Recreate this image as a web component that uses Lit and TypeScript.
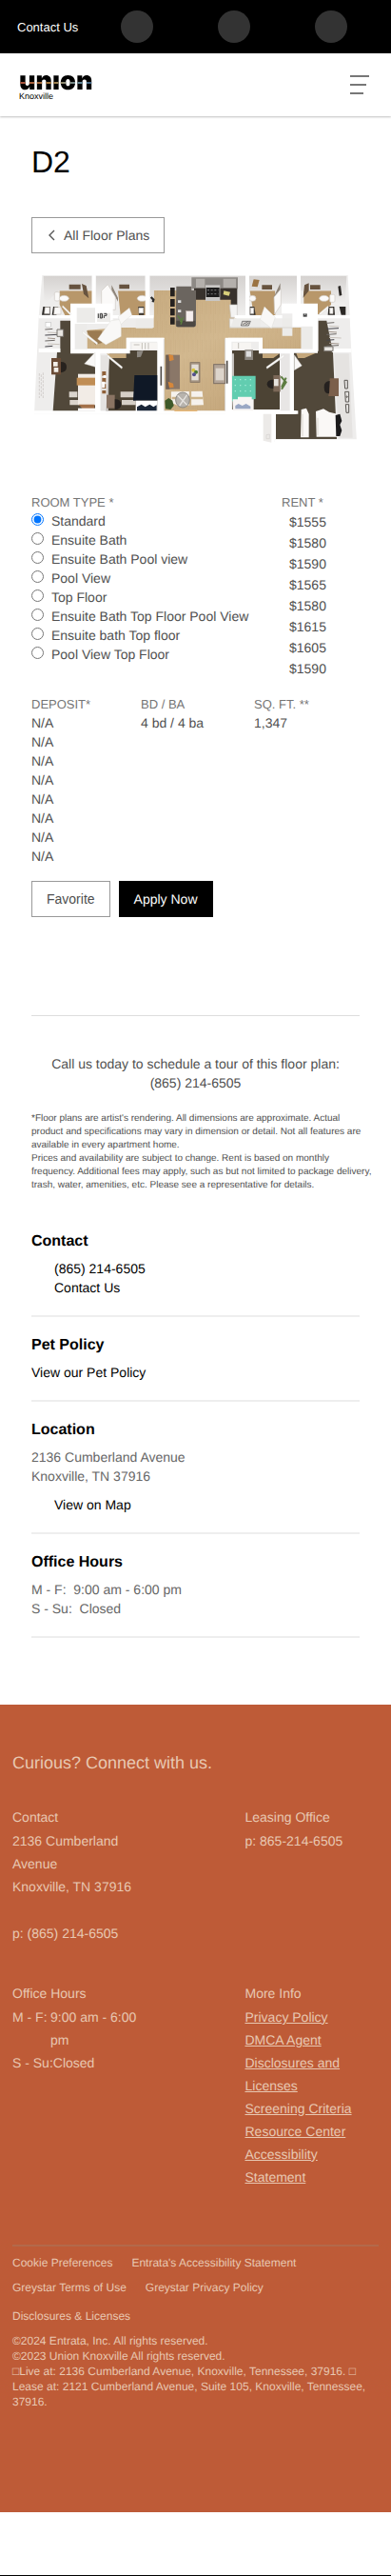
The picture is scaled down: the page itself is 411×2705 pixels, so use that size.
import { LitElement, html, css, svg } from "lit";
import { customElement, state } from "lit/decorators.js";

const SANS = css`"Liberation Sans", Arial, Helvetica, sans-serif`;

interface Room {
  name: string;
  rent: string;
}

const ROOMS: Room[] = [
  { name: "Standard", rent: "$1555" },
  { name: "Ensuite Bath", rent: "$1580" },
  { name: "Ensuite Bath Pool view", rent: "$1590" },
  { name: "Pool View", rent: "$1565" },
  { name: "Top Floor", rent: "$1580" },
  { name: "Ensuite Bath Top Floor Pool View", rent: "$1615" },
  { name: "Ensuite bath Top floor", rent: "$1605" },
  { name: "Pool View Top Floor", rent: "$1590" },
];

@customElement("site-header")
export class SiteHeader extends LitElement {
  static styles = css`
    :host {
      display: block;
    }
    .quick {
      display: grid;
      grid-template-columns: 75px repeat(3, 1fr);
      align-items: center;
      height: 56px;
      padding: 0 12px 0 18px;
      background: #000;
      font-size: 13px;
    }
    .quick a {
      color: #fff;
      text-decoration: none;
      white-space: nowrap;
    }
    .quick .dot {
      width: 34px;
      height: 34px;
      border-radius: 50%;
      background: #333;
      justify-self: center;
    }
    .brand {
      display: flex;
      justify-content: space-between;
      align-items: center;
      height: 66px;
      padding: 0 23px 0 20px;
      background: #fff;
      box-shadow: 0 1px 2px rgba(0, 0, 0, 0.25);
    }
    .logo {
      display: flex;
      flex-direction: column;
      color: #000;
      text-decoration: none;
    }
    .word {
      font: 900 27px/23px Inter, "Liberation Sans", sans-serif;
      color: transparent;
      background:
        linear-gradient(90deg, #a8503c, #a37a3e 45%, #8d8970 60%, #5f8496 85%, #3f6080)
          0 13px / 100% 2px no-repeat,
        #000;
      -webkit-background-clip: text;
      background-clip: text;
    }
    .city {
      font-size: 9px;
      line-height: 10px;
    }
    .menu {
      display: flex;
      padding: 0;
      border: 0;
      background: none;
    }
  `;

  render() {
    return html`
      <nav class="quick" aria-label="Quick links">
        <a href="#contact">Contact Us</a>
        <a class="dot" href="#call" aria-label="Call"></a>
        <a class="dot" href="#map" aria-label="Map"></a>
        <a class="dot" href="#share" aria-label="Share"></a>
      </nav>
      <header class="brand">
        <a class="logo" href="#home">
          <span class="word">unıon</span>
          <span class="city">Knoxville</span>
        </a>
        <button class="menu" aria-label="Menu">
          <svg width="20" height="20" viewBox="0 0 20 20" stroke="#777" stroke-width="2">
            <path d="M0 1h20M0 10h17M0 19h14" />
          </svg>
        </button>
      </header>
    `;
  }
}

@customElement("plan-picture")
export class PlanPicture extends LitElement {
  static styles = css`
    :host,
    svg {
      display: block;
      width: 100%;
    }
  `;

  private clothes(x: number, y: number, n: number) {
    return Array.from(
      { length: n },
      (_, i) => svg`<path d="M${x + (i % 2) * 8} ${y + i * 9}l${24 + (i % 3) * 7} ${(i % 2) * 4 - 2}"
        stroke=${["#6d6865", "#c9c3bc", "#45444a", "#a3978d"][i % 4]} stroke-width="3" />`
    );
  }

  render() {
    return html`
      <svg viewBox="99 30 1035 570" role="img" aria-label="Four bedroom, four bathroom floor plan">
        <defs>
          <linearGradient id="wood" x1="0" y1="0" x2="1" y2="1">
            <stop offset="0" stop-color="#c3a67a" />
            <stop offset="0.5" stop-color="#d2b88f" />
            <stop offset="1" stop-color="#bfa074" />
          </linearGradient>
          <pattern id="planks" width="14" height="60" patternUnits="userSpaceOnUse">
            <path d="M0 0v60M7 20v40" stroke="#a98c60" stroke-width="1" opacity="0.35" />
          </pattern>
          <linearGradient id="wall" x1="0" y1="0" x2="0" y2="1">
            <stop offset="0" stop-color="#d5d2d0" />
            <stop offset="1" stop-color="#f1f0ef" />
          </linearGradient>
        </defs>

        <path fill="#eeedec" d="M133 57H1097L1103 190L1108 300L1125 582H866V494H108L122 190Z" />

        <!-- timber floors -->
        <path fill="url(#wood)"
          d="M485 104H745V222H950V288H828V254H720V486H517V254H400V288H275V230L380 222H485Z" />
        <path fill="url(#planks)"
          d="M485 104H745V222H950V288H828V254H720V486H517V254H400V288H275V230L380 222H485Z" />
        <path fill="#b8976a" d="M188 106H290V148H228V183H205L188 150Z" />
        <path fill="#b8976a" d="M372 106H462V183H380Z" />
        <path fill="#b8976a" d="M788 106H868V183H800Z" />
        <path fill="#b8976a" d="M958 106H1044V150L1010 180H1000V148H958Z" />
        <path fill="#9b7b52" d="M272 232H322V270L300 275Z" />

        <!-- carpets -->
        <path fill="#51483a" d="M190 200H222V300H302V486H167L180 300H190Z" />
        <path fill="#4c4334" d="M346 294H497V486H334Z" />
        <path fill="#4c4334" d="M732 294H882V486H732Z" />
        <path fill="#51483a" d="M1004 200H1030L1050 300L1062 574H868V494H927V296H1004Z" />
        <path fill="#c4a77b" d="M336 304H398V318H350ZM828 304H882L862 318H828ZM934 302H996L960 318H940Z" />

        <!-- bathroom walls and fixtures -->
        <path fill="url(#wall)"
          d="M137 60H290V106H185L140 150ZM302 60H458V106H372V150H302ZM786 60H938V148H868V106H786ZM948 60H1093L1088 150H1044V106H948Z" />
        <path fill="url(#wall)" d="M472 60H775V188H745V104H485V188H472Z" />
        <path fill="#67533f" d="M218 86h36v15h-36zM258 84l14 6 8 40-16-14zM376 86h32v14h-32zM826 88h32v14h-32zM978 88h32v14h-32zM956 128l4-40 14-6v24z" />
        <path fill="#8e8479" d="M862 128l22-46v26l-14 22zM352 88l20 40v12l-20-36z" />
        <path fill="#9b7342" d="M800 70l18 2-6 22-18-2z" />
        <path fill="#2c2926" d="M1066 92l8-2 4 30-8 2zM136 156h22v26h-26zM168 156h16l-6 26h-14zM436 156h18v26h-16zM788 156h14l4 26h-18zM1036 156h18l2 26h-22zM1070 156h20v26h-14z" />
        <g fill="#fbfaf9" stroke="#cfc9c2" stroke-width="2">
          <rect x="172" y="110" width="16" height="28" rx="5" />
          <ellipse cx="202" cy="130" rx="15" ry="9" />
          <ellipse cx="448" cy="130" rx="15" ry="9" />
          <ellipse cx="796" cy="130" rx="11" ry="9" />
          <ellipse cx="1022" cy="130" rx="15" ry="9" />
          <rect x="1040" y="118" width="16" height="24" rx="4" />
          <path d="M142 158h14v20h-16zM172 158h20v22h-22zM438 160h14v16h-14zM790 160h10v18h-10zM1040 160h10v18h-10z" />
          <path d="M320 106l20-20 24 40v40h-44z" />
          <path d="M864 126l22-26v50l-20 30z" />
        </g>

        <!-- kitchen -->
        <path fill="#8d8985" d="M604 64h146v36H604z" />
        <path fill="#b4b0ac" d="M618 68h28v28h-28zM704 68h40v28h-40z" />
        <path fill="#38322d" d="M612 98h136v52H728v-16H612z" />
        <rect x="648" y="88" width="46" height="50" fill="#c9c7c5" />
        <rect x="650" y="96" width="42" height="30" fill="#1d1c1c" />
        <path d="M654 104h34M654 116h34" stroke="#777" stroke-width="3" stroke-dasharray="6 5" />
        <path fill="#d8cf7a" d="M706 106l20 4-4 12-18-4z" />
        <path fill="#6b655f" d="M556 92h48v12h14v108q0 8-8 8h-50q-6 0-6-8z" />
        <path fill="#4d4843" d="M556 200h60v12q0 8-8 8h-46q-6 0-6-8z" />
        <rect x="587" y="170" width="22" height="32" fill="#f5eeee" stroke="#d4c6c0" />
        <path d="M544 96v28M544 132v24M544 162v22M544 190v22" stroke="#25211f" stroke-width="14" />
        <path d="M566 136v8M566 166v8" stroke="#ddd" stroke-width="10" />
        <path d="M560 184l14 18-4 10M578 190l-10 14" stroke="#5b7f3d" stroke-width="4" fill="none" />
        <path d="M476 126l8 8-2 8" stroke="#2b2b2b" stroke-width="7" fill="none" />
        <path fill="#f4f3f2" stroke="#c9c5c1" stroke-width="2" d="M724 150h24v40h-20zM724 194h14v26h-14z" />

        <!-- interior wall tops -->
        <path fill="#ecebe9" d="M234 210h40v80h-40zM428 190h54v34h-54zM738 193h84v29h-96zM890 193h32v55h-32zM950 216h46v72h-46z" />
        <g fill="#fff">
          <path d="M290 57h12v100h-12zM458 57h14v132h-14zM774 57h12v132h-12zM936 57h12v100h-12zM122 183h108v10H122zM354 183h130v10H354zM740 183h150v10H740zM1000 183h104v10h-104z" />
          <path d="M228 146h128v64H236v80h-14V146z" />
          <path d="M888 146h114v152h-16v-80h-64v-40h-34z" />
          <path d="M222 290h176v-36h120v234h-22V266H410v38H316v184h-16V304h-78zM122 288h68v12h-68z" />
          <path d="M710 254h118v36h174v12h-76v182h14v10H710v-14h172V304h-66v-38h-86v218h-20z" />
          <path d="M1050 288h58v12h-62z" />
          <path d="M108 484h826v10H108zM862 494h8v80h-8z" />
          <path d="M866 574h260v9H866z" />
        </g>
        <path d="M724 222h196v4M517 258v226M710 258v226" stroke="#d9d6d2" stroke-width="3" fill="none" />
        <path fill="#ecebe9" d="M242 160h58v46h-58zM306 176h42v28h-42z" />
        <path fill="#e2e0de" d="M732 304h6v110l-6 60zM318 310h26l-2 174h-24zM884 304h30v180h-30zM1054 304h46l12 265h-44z" opacity="0.8" />
        <path d="M310 178v14M316 178v14h6v-14h-6M328 178h8v6h-8v8M322 192v-12" stroke="#3a3a3a" stroke-width="3" fill="none" />
        <path d="M956 178h12v10h-12z" fill="#444" />
        <path d="M962 178v5" stroke="#fff" stroke-width="2" />
        <path d="M764 202h26l-6 14h-24z" fill="#d6d2ce" stroke="#4b4b4b" stroke-width="2" />
        <path d="M766 212l16-9M774 214l12-8" stroke="#4b4b4b" stroke-width="2" />

        <!-- doors -->
        <g fill="#f9f8f7" stroke="#d6d3cf" stroke-width="1">
          <path d="M308 258l42-58 32-4v54l-48 26z" />
          <path d="M372 188l36-28 8 22-24 20-10 10z" />
          <path d="M820 196l14-40 34 34-12 34z" />
          <path d="M266 336l34-36v46zM928 308l24 34-24 14z" />
          <path d="M260 232l48 38-2 6-46-36zM340 308l46 38-2 6-46-38zM896 306l-56 40 2 6 54-38z" />
          <path d="M198 152l26 26-2 5-26-26zM1006 178l28-24 2 6-26 22z" />
        </g>

        <!-- closets -->
        <rect x="144" y="206" width="16" height="14" fill="#fff" stroke="#999" />
        ${this.clothes(142, 228, 7)} ${this.clothes(1030, 208, 9)}
        <path fill="#e9e6e2" stroke="#77726c" stroke-width="3" d="M180 228h20v22h-20zM1022 282h28v14h-28z" />
        <path d="M416 280h80M734 280h58" stroke="#f7f5f2" stroke-width="20" />
        <path d="M422 276h18M448 270v20M458 270v20M468 270v20M752 270v18" stroke="#a8a29a" stroke-width="2" />
        <path fill="#8c8780" d="M432 296l20-2-8 20-12 2zM772 292h26v32h-26z" />
        <path fill="#ddd" d="M776 296h16v18h-16z" />

        <!-- bedroom one -->
        <path fill="#6b4c37" d="M162 318h30v52h-30z" />
        <path fill="#27221e" d="M192 330q18 0 18 16t-18 18z" />
        <path fill="#f3efe9" d="M168 330h14v14h-14zM170 348h14v14h-14z" />
        <path fill="#f2ece6" d="M246 368h54v98h-54z" />
        <path fill="#c08d54" d="M242 380h58v24h-58z" />
        <path fill="#dbd5cd" d="M218 424h26v18h-26zM220 450h26v16h-26z" />
        <path fill="#a4714a" d="M248 464h50v14h-38z" />
        <path fill="#fff" d="M246 476h54v9h-54z" />
        <path d="M136 364v82M124 366v78M130 370v70" stroke="#c4c0bc" stroke-width="2" stroke-dasharray="8 4" />

        <!-- bedroom two -->
        <path d="M328 360v70" stroke="#8f6038" stroke-width="12" stroke-dasharray="14 6" />
        <path d="M326 392v20M330 372v8" stroke="#fff" stroke-width="9" />
        <path fill="#8a7463" d="M336 434h26v42h-26z" />
        <path fill="#25211f" d="M362 448q20 0 20 16t-20 16z" />
        <path fill="#d5cfc6" d="M380 424h46v18h-46zM384 450h44v16h-44z" />
        <path fill="#0f1826" d="M424 372h72v80h-76z" />
        <path fill="#fff" d="M428 452h68v34h-68z" />
        <path fill="#1b2738" d="M432 472l14-8 12 8 14-8 12 8 10-6v18h-62z" />

        <!-- living room -->
        <path fill="#8a7768" d="M523 308h44v108h-44z" />
        <path fill="#6f5f54" d="M523 308h12v108h-12z" />
        <path fill="#d5873b" d="M532 306l14 4 2 14-14 4zM530 392l16 6 2 12-14 2z" />
        <path fill="#fbfaf8" d="M540 424l98-2 4 44-80 2-22-10z" opacity="0.9" />
        <path d="M542 444h98M600 422v46" stroke="#cdb48a" stroke-width="7" />
        <ellipse cx="576" cy="450" rx="22" ry="24" fill="#b7b3ad" stroke="#8d8983" stroke-width="3" />
        <path d="M560 436l30 30M590 434l-24 34" stroke="#e6e3df" stroke-width="4" />
        <path fill="#3f5a2a" d="M520 452l12-8 12 8 4 16-10 12-16-2z" />
        <rect x="600" y="332" width="30" height="62" fill="#a39280" stroke="#786a5d" stroke-width="2" />
        <path fill="#e4ded6" d="M604 338h22v50h-22z" />
        <circle cx="610" cy="356" r="6" fill="#d7c33d" />
        <circle cx="618" cy="362" r="6" fill="#4c7a35" />
        <circle cx="612" cy="370" r="6" fill="#53508f" />
        <rect x="674" y="338" width="36" height="60" fill="#b3a497" stroke="#7b6e63" stroke-width="3" />
        <path fill="#dcd4cb" d="M680 350h26v38h-26z" />
        <path d="M508 344v60M716 326v72" stroke="#504b47" stroke-width="5" />
        <path fill="#e8b878" d="M550 482h72v4h-72z" />

        <!-- bedroom three -->
        <path fill="#62cdb0" d="M732 374h74v72q-38 14-74 8z" />
        <path d="M740 386h60M740 404h60M740 422h60" stroke="#a5ecd8" stroke-width="4" stroke-dasharray="4 12" />
        <path fill="#f8f5f4" d="M734 448h66v36h-66zM750 440h44v16h-44z" />
        <path fill="#9aa7c4" d="M742 468l10-6 12 6 12-6 14 8v8h-48z" />
        <path fill="#7c6858" d="M862 372h22v52h-22z" />
        <path fill="#25211f" d="M862 386q-20 0-20 14t20 14z" />
        <path d="M886 376l16 18-14 22M902 380l-14 30" stroke="#5d7d42" stroke-width="6" fill="none" />
        <rect x="864" y="384" width="14" height="22" fill="#e5e2dd" />

        <!-- bedroom four -->
        <path fill="#7b5f4b" d="M1040 382h28v56h-32z" />
        <path fill="#25211f" d="M1040 390q-18 0-18 20t16 20z" />
        <path fill="#faf8f6" d="M950 480l16-4 8 18v74h-26zM996 486l24-8 18 10 26 6v72h-66z" />
        <path fill="#e3ded8" d="M952 494h4v70h-4zM1000 506h4v56h-4z" />
        <path fill="#1c1b1c" d="M1058 498l14-4 6 22-6 12 6 18-6 18h-12z" />
        <g fill="none" stroke="#5a5652" stroke-width="3">
          <path d="M1086 388h10v26h-8zM1088 424h12v32h-10zM1090 464h10v26h-8z" />
          <circle cx="1094" cy="440" r="2" />
        </g>
        <path fill="#fff" d="M826 494h38v92h-38z" />
        <path fill="#eceae8" d="M830 494h26v90l-26-6z" />
        <path d="M840 560l10-2v14h-10z" fill="none" stroke="#d3d0cd" stroke-width="2" />
      </svg>
    `;
  }
}

@customElement("plan-details")
export class PlanDetails extends LitElement {
  static styles = css`
    :host {
      display: block;
      padding: 30px 33px 70px;
      color: #4f4f4f;
      font-size: 14px;
      line-height: 20px;
    }
    h1 {
      margin: 0 0 40px;
      color: #000;
      font-size: 32px;
      font-weight: 400;
      line-height: 36px;
    }
    .btn {
      display: inline-flex;
      align-items: center;
      box-sizing: border-box;
      height: 38px;
      padding: 0 15px;
      border: 1px solid #999;
      background: #fff;
      color: #4f4f4f;
      font: inherit;
      text-decoration: none;
    }
    .btn.solid {
      border-color: #000;
      background: #000;
      color: #fff;
    }
    .btn svg {
      margin-right: 8px;
    }
    plan-picture {
      margin: 14px 0 48px;
    }
    .rooms {
      display: grid;
      grid-template-columns: 1fr 82px;
      margin: 0 0 17px;
    }
    fieldset {
      min-width: 0;
      margin: 0;
      padding: 0;
      border: 0;
    }
    .head,
    th {
      padding: 0;
      color: #757575;
      font-size: 13px;
      font-weight: 400;
      line-height: 19px;
      text-align: left;
    }
    .room {
      display: flex;
      align-items: flex-start;
    }
    .room input {
      flex: none;
      width: 13px;
      height: 13px;
      margin: 2px 8px 0 0;
    }
    .room span {
      white-space: nowrap;
    }
    .rents {
      margin: 0;
      padding: 0 0 0 8px;
      list-style: none;
      line-height: 22px;
    }
    table {
      width: 100%;
      border-collapse: collapse;
      table-layout: fixed;
    }
    .deposit {
      width: 33.33%;
    }
    .beds {
      width: 34.5%;
    }
    td {
      padding: 0;
    }
    .actions {
      display: flex;
      gap: 9px;
      margin-top: 16px;
    }
    .call {
      margin: 103px 0 21px;
      padding-top: 40px;
      border-top: 1px solid #ddd;
      text-align: center;
    }
    .call a {
      display: block;
      color: inherit;
      text-decoration: none;
    }
    .notes {
      margin: 0 -13px 40px 0;
      font-size: 10px;
      line-height: 14px;
    }
    .notes p {
      margin: 0;
    }
    section {
      margin-bottom: 18px;
      padding-bottom: 19px;
      border-bottom: 2px solid #eee;
      color: #666;
    }
    section:last-child {
      margin-bottom: 0;
    }
    h2 {
      margin: 0 0 6px;
      color: #000;
      font-size: 16px;
      line-height: 24px;
    }
    section a {
      display: block;
      color: #000;
      text-decoration: none;
    }
    .indent {
      padding-left: 24px;
    }
    .map {
      margin-top: 10px;
    }
    address {
      font-style: normal;
    }
    .hours {
      margin: 0;
      white-space: pre;
    }
  `;

  @state() private selected = 0;

  render() {
    return html`
      <h1>D2</h1>
      <a class="btn" href="#floorplans">
        <svg width="10" height="12" viewBox="0 0 10 12" fill="none" stroke="#555" stroke-width="1.4">
          <path d="M8 1L3 6l5 5" />
        </svg>
        All Floor Plans
      </a>
      <plan-picture></plan-picture>
      <div class="rooms">
        <fieldset>
          <legend class="head">ROOM TYPE *</legend>
          ${ROOMS.map(
            (room, i) => html`
              <label class="room">
                <input type="radio" name="room" .checked=${i === this.selected}
                  @change=${() => (this.selected = i)} />
                <span>${room.name}</span>
              </label>
            `
          )}
        </fieldset>
        <div>
          <div class="head">RENT *</div>
          <ul class="rents">
            ${ROOMS.map((room) => html`<li>${room.rent}</li>`)}
          </ul>
        </div>
      </div>
      <table>
        <thead>
          <tr>
            <th class="deposit">DEPOSIT*</th>
            <th class="beds">BD / BA</th>
            <th>SQ. FT. **</th>
          </tr>
        </thead>
        <tbody>
          ${ROOMS.map(
            (_, i) => html`
              <tr>
                <td>N/A</td>
                <td>${i === 0 ? "4 bd / 4 ba" : ""}</td>
                <td>${i === 0 ? "1,347" : ""}</td>
              </tr>
            `
          )}
        </tbody>
      </table>
      <div class="actions">
        <button class="btn">Favorite</button>
        <a class="btn solid" href="#apply">Apply Now</a>
      </div>
      <div class="call">
        Call us today to schedule a tour of this floor plan:
        <a href="tel:8652146505">(865) 214-6505</a>
      </div>
      <div class="notes">
        <p>
          *Floor plans are artist's rendering. All dimensions are approximate. Actual product and
          specifications may vary in dimension or detail. Not all features are available in every
          apartment home.
        </p>
        <p>
          Prices and availability are subject to change. Rent is based on monthly frequency.
          Additional fees may apply, such as but not limited to package delivery, trash, water,
          amenities, etc. Please see a representative for details.
        </p>
      </div>
      <section>
        <h2>Contact</h2>
        <a class="indent" href="tel:8652146505">(865) 214-6505</a>
        <a class="indent" href="#contact">Contact Us</a>
      </section>
      <section>
        <h2>Pet Policy</h2>
        <a href="#pets">View our Pet Policy</a>
      </section>
      <section>
        <h2>Location</h2>
        <address>2136 Cumberland Avenue<br />Knoxville, TN 37916</address>
        <a class="indent map" href="#map">View on Map</a>
      </section>
      <section>
        <h2>Office Hours</h2>
        <p class="hours">M - F:  9:00 am - 6:00 pm</p>
        <p class="hours">S - Su:  Closed</p>
      </section>
    `;
  }
}

@customElement("site-footer")
export class SiteFooter extends LitElement {
  static styles = css`
    :host {
      display: block;
      padding: 48px 13px 108px;
      background: #be5b37;
      color: #e8c8b2;
      font-size: 14px;
      line-height: 24px;
    }
    h2,
    h3 {
      margin: 0;
      font-size: 14px;
      font-weight: 400;
      line-height: 25px;
    }
    h2 {
      margin-bottom: 32px;
      font-size: 18px;
      line-height: 26px;
    }
    p {
      margin: 0;
    }
    .columns {
      display: grid;
      grid-template-columns: 36% 36.5%;
      justify-content: space-between;
      row-gap: 39px;
      padding-bottom: 59px;
      border-bottom: 2px solid #b3694a;
    }
    .columns a {
      color: inherit;
    }
    address {
      margin-bottom: 25px;
      font-style: normal;
    }
    .links {
      margin: 0;
      padding: 0;
      list-style: none;
    }
    dl {
      margin: 0;
    }
    .day {
      display: flex;
    }
    dt {
      flex: none;
      min-width: 40px;
    }
    dd {
      margin: 0;
    }
    .legal {
      display: flex;
      flex-direction: column;
      gap: 10px;
      padding-top: 9px;
      font-size: 12px;
      line-height: 16px;
    }
    .legal nav {
      display: flex;
      flex-wrap: wrap;
      gap: 10px 20px;
      margin-bottom: 4px;
    }
    .legal a {
      color: inherit;
      text-decoration: none;
    }
  `;

  render() {
    return html`
      <h2>Curious? Connect with us.</h2>
      <div class="columns">
        <div>
          <h3>Contact</h3>
          <address>2136 Cumberland Avenue<br />Knoxville, TN 37916</address>
          <p>p: (865) 214-6505</p>
        </div>
        <div>
          <h3>Leasing Office</h3>
          <p>p: 865-214-6505</p>
        </div>
        <div>
          <h3>Office Hours</h3>
          <dl>
            <div class="day"><dt>M - F:</dt><dd>9:00 am - 6:00 pm</dd></div>
            <div class="day"><dt>S - Su:</dt><dd>Closed</dd></div>
          </dl>
        </div>
        <div>
          <h3>More Info</h3>
          <ul class="links">
            <li><a href="#privacy">Privacy Policy</a></li>
            <li><a href="#dmca">DMCA Agent</a></li>
            <li><a href="#disclosures">Disclosures and Licenses</a></li>
            <li><a href="#screening">Screening Criteria</a></li>
            <li><a href="#resources">Resource Center</a></li>
            <li><a href="#accessibility">Accessibility Statement</a></li>
          </ul>
        </div>
      </div>
      <div class="legal">
        <nav aria-label="Legal">
          <a href="#cookies">Cookie Preferences</a>
          <a href="#entrata">Entrata's Accessibility Statement</a>
          <a href="#terms">Greystar Terms of Use</a>
          <a href="#greystar">Greystar Privacy Policy</a>
        </nav>
        <a href="#licenses">Disclosures &amp; Licenses</a>
        <div>
          <p>©2024 Entrata, Inc. All rights reserved.</p>
          <p>©2023 Union Knoxville All rights reserved.</p>
          <p>
            □Live at: 2136 Cumberland Avenue, Knoxville, Tennessee, 37916. □ Lease at: 2121
            Cumberland Avenue, Suite 105, Knoxville, Tennessee, 37916.
          </p>
        </div>
      </div>
    `;
  }
}

@customElement("app-root")
export class AppRoot extends LitElement {
  static styles = css`
    :host {
      display: block;
      background: #fff;
      font-family: ${SANS};
      text-rendering: geometricPrecision;
    }
    .tail {
      height: 66px;
      border-bottom: 1px solid #000;
    }
  `;

  render() {
    return html`
      <site-header></site-header>
      <main><plan-details></plan-details></main>
      <site-footer></site-footer>
      <div class="tail"></div>
    `;
  }
}
